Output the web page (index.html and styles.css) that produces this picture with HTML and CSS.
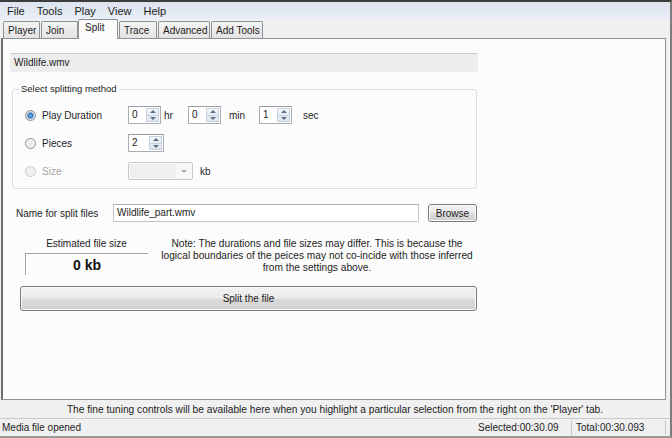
FILE: index.html
```html
<html>

<head>
    <meta charset="UTF-8">
    <link rel="stylesheet" href="styles.css">
</head>

<body>
    <div class="window">
        <div class="menubar">
            <span>File</span><span>Tools</span><span>Play</span><span>View</span><span>Help</span>
        </div>

        <div class="tabs">
            <div class="tab t-player">Player</div>
            <div class="tab t-join">Join</div>
            <div class="tab active t-split">Split</div>
            <div class="tab t-trace">Trace</div>
            <div class="tab t-adv">Advanced</div>
            <div class="tab t-add">Add Tools</div>
        </div>

        <div class="panel">
            <div class="filename">Wildlife.wmv</div>

            <fieldset class="group">
                <legend>Select splitting method</legend>
                <div class="row">
                    <div class="opt"><span class="radio checked"></span>Play Duration</div>
                    <div class="spin"><span class="val">0</span><span class="arrows"><span class="up"></span><span class="down"></span></span></div>
                    <span class="unit u-hr">hr</span>
                    <div class="spin"><span class="val">0</span><span class="arrows"><span class="up"></span><span class="down"></span></span></div>
                    <span class="unit u-min">min</span>
                    <div class="spin"><span class="val">1</span><span class="arrows"><span class="up"></span><span class="down"></span></span></div>
                    <span class="unit u-sec">sec</span>
                </div>
                <div class="row">
                    <div class="opt"><span class="radio"></span>Pieces</div>
                    <div class="spin wide"><span class="val">2</span><span class="arrows"><span class="up"></span><span class="down"></span></span></div>
                </div>
                <div class="row disabled">
                    <div class="opt"><span class="radio"></span>Size</div>
                    <div class="combo"><span class="field"></span><span class="drop"></span></div>
                    <span class="unit u-kb">kb</span>
                </div>
            </fieldset>

            <div class="name-row">
                <span class="name-label">Name for split files</span>
                <div class="text-input">Wildlife_part.wmv</div>
                <button class="btn browse">Browse</button>
            </div>

            <div class="estimate-row">
                <div class="estimate">
                    <div class="est-label">Estimated file size</div>
                    <div class="est-box">0 kb</div>
                </div>
                <div class="note">Note: The durations and file sizes may differ. This is because the<br>logical boundaries of the peices may not co-incide with those inferred<br>from the settings above.</div>
            </div>

            <button class="btn split">Split the file</button>
        </div>

        <div class="hint">The fine tuning controls will be available here when you highlight a particular selection from the right on the 'Player' tab.</div>

        <div class="status">
            <span class="status-msg">Media file opened</span>
            <span class="sect sect-sel">Selected:00:30.09</span>
            <span class="sect sect-total">Total:00:30.093</span>
        </div>
    </div>
</body>

</html>
```

FILE: styles.css
```css
* {
    box-sizing: border-box;
}
body {
    margin: 0;
    font-family: "Liberation Sans", Arial, sans-serif;
    font-size: 10px;
    color: #1c1c1c;
    background: #f0f0f0;
}
.window {
    width: 672px;
    height: 438px;
    display: flex;
    flex-direction: column;
    border-top: 2px solid #3d3d3d;
    border-right: 2px solid #7d7d7d;
    border-bottom: 2px solid #9a9a9a;
    background: #f0f0f0;
}
.menubar {
    height: 17px;
    display: flex;
    align-items: center;
    padding-left: 1px;
    font-size: 11px;
    background: linear-gradient(#dce4ef, #e9eef5);
}
.menubar span {
    padding: 0 6px;
}

/* tabs */
.tabs {
    height: 19px;
    display: flex;
    align-items: flex-end;
    padding-left: 3px;
}
.tab {
    height: 17px;
    margin-right: 1px;
    padding: 3px 0 0 4px;
    border: 1px solid #8e9196;
    border-bottom: none;
    border-radius: 2px 2px 0 0;
    background: linear-gradient(#f4f4f4, #e3e3e3);
}
.tab.active {
    height: 20px;
    margin-left: -1px;
    margin-bottom: -1px;
    padding: 2px 0 0 6px;
    background: #fcfcfc;
    position: relative;
    z-index: 1;
}
.t-player { width: 37px; }
.t-join { width: 37px; }
.t-split { width: 40px; }
.t-trace { width: 38px; }
.t-adv { width: 52px; }
.t-add { width: 52px; }

/* main panel */
.panel {
    flex: 1;
    margin: 0 4px 0 1px;
    padding: 14px 0 0 7px;
    background: #fcfcfc;
    border: 1px solid #8e9196;
    border-left: 2px solid #6f6f6f;
}
.filename {
    width: 468px;
    height: 19px;
    padding-left: 4px;
    line-height: 18px;
    background: #ededed;
    border-top: 1px solid #cfcfcf;
}
.group {
    width: 465px;
    height: 106px;
    margin: 11px 0 0 2px;
    padding: 11px 0 0 12px;
    border: 1px solid #d5dfe5;
    border-radius: 3px;
}
.group legend {
    margin-left: -6px;
    padding: 0 2px;
    font-size: 9.5px;
    line-height: 12px;
}
.row {
    display: flex;
    align-items: center;
    height: 18px;
    margin-bottom: 10px;
}
.opt {
    width: 103px;
    display: flex;
    align-items: center;
}
.radio {
    width: 11px;
    height: 11px;
    margin-right: 6px;
    border: 1px solid #8f8f8f;
    border-radius: 50%;
    background: radial-gradient(circle, #e6e6e6 0, #f6f6f6 4px, #d6d6d6 6px);
}
.radio.checked {
    background: radial-gradient(circle, #79b8ee 0, #2a74bd 2.5px, #cfd9e3 3.5px, #f2f2f2 6px);
}
.disabled {
    color: #a6a6a6;
}
.disabled .radio {
    border-color: #cacaca;
    background: #f1f1f1;
}
.disabled .unit {
    color: #1c1c1c;
}

/* spinners */
.spin {
    display: flex;
    width: 33px;
    height: 18px;
    border: 1px solid #abadb3;
    border-top-color: #9a9ca3;
    background: #fff;
}
.spin.wide {
    width: 36px;
}
.spin .val {
    flex: 1;
    padding-left: 3px;
    line-height: 16px;
}
.arrows {
    width: 13px;
    margin: 1px;
    display: flex;
    flex-direction: column;
    border: 1px solid #c8d2dd;
    background: linear-gradient(#f3f6f9, #dee5ed);
}
.arrows span {
    flex: 1;
    display: flex;
    align-items: center;
    justify-content: center;
}
.arrows span + span {
    border-top: 1px solid #c8d2dd;
}
.up::before {
    content: "";
    border-left: 3px solid transparent;
    border-right: 3px solid transparent;
    border-bottom: 3px solid #5a6d8c;
}
.down::before {
    content: "";
    border-left: 3px solid transparent;
    border-right: 3px solid transparent;
    border-top: 3px solid #5a6d8c;
}
.u-hr { margin-left: 3px; width: 24px; }
.u-min { margin-left: 8px; width: 30px; }
.u-sec { margin-left: 11px; }
.u-kb { margin-left: 7px; }

.combo {
    display: flex;
    width: 65px;
    height: 18px;
    border: 1px solid #c9c9c9;
    border-radius: 2px;
    background: #f7f7f7;
}
.combo .field {
    flex: 1;
    margin: 1px 0 1px 1px;
    background: #efefef;
}
.combo .drop {
    width: 16px;
    display: flex;
    align-items: center;
    justify-content: center;
}
.combo .drop::before {
    content: "";
    border-left: 3px solid transparent;
    border-right: 3px solid transparent;
    border-top: 3px solid #a8a8a8;
}

/* name row */
.name-row {
    display: flex;
    align-items: center;
    margin-top: 15px;
    height: 18px;
}
.name-label {
    margin-left: 6px;
    width: 97px;
}
.text-input {
    width: 306px;
    height: 18px;
    padding-left: 3px;
    line-height: 16px;
    border: 1px solid #c3c6cc;
    border-top-color: #a9abb1;
    background: #fff;
}
.btn {
    font-family: inherit;
    font-size: 10px;
    color: #1c1c1c;
    padding: 0;
    border: 1px solid #7a7a7a;
    border-radius: 3px;
    background: linear-gradient(#f3f3f3 0%, #ebebeb 48%, #dcdcdc 52%, #cfcfcf 100%);
    box-shadow: inset 0 0 0 1px #fbfbfb;
}
.browse {
    margin-left: 9px;
    width: 49px;
    height: 18px;
}

/* estimate + note */
.estimate-row {
    display: flex;
    margin-top: 16px;
}
.estimate {
    width: 123px;
    margin-left: 15px;
}
.est-label {
    text-align: center;
    line-height: 12px;
}
.est-box {
    height: 22px;
    margin-top: 3px;
    border-top: 1px solid #a4a4a4;
    border-left: 1px solid #a4a4a4;
    text-align: center;
    line-height: 22px;
    font-size: 14px;
    font-weight: bold;
    color: #111;
}
.note {
    width: 336px;
    margin-left: 1px;
    text-align: center;
    font-size: 10.2px;
    line-height: 12px;
    white-space: nowrap;
}
.split {
    display: block;
    margin: 11px 0 0 10px;
    width: 457px;
    height: 25px;
}

/* bottom */
.hint {
    height: 18px;
    line-height: 19px;
    text-align: center;
    font-size: 10.2px;
}
.status {
    height: 18px;
    display: flex;
    align-items: center;
    padding-right: 4px;
    border-top: 1px solid #c9c9c9;
}
.status-msg {
    flex: 1;
    padding-left: 2px;
}
.sect {
    height: 14px;
    line-height: 14px;
    padding-left: 4px;
    border-right: 1px solid #c5c5c5;
}
.sect-sel {
    width: 98px;
}
.sect-total {
    width: 94px;
}
```
